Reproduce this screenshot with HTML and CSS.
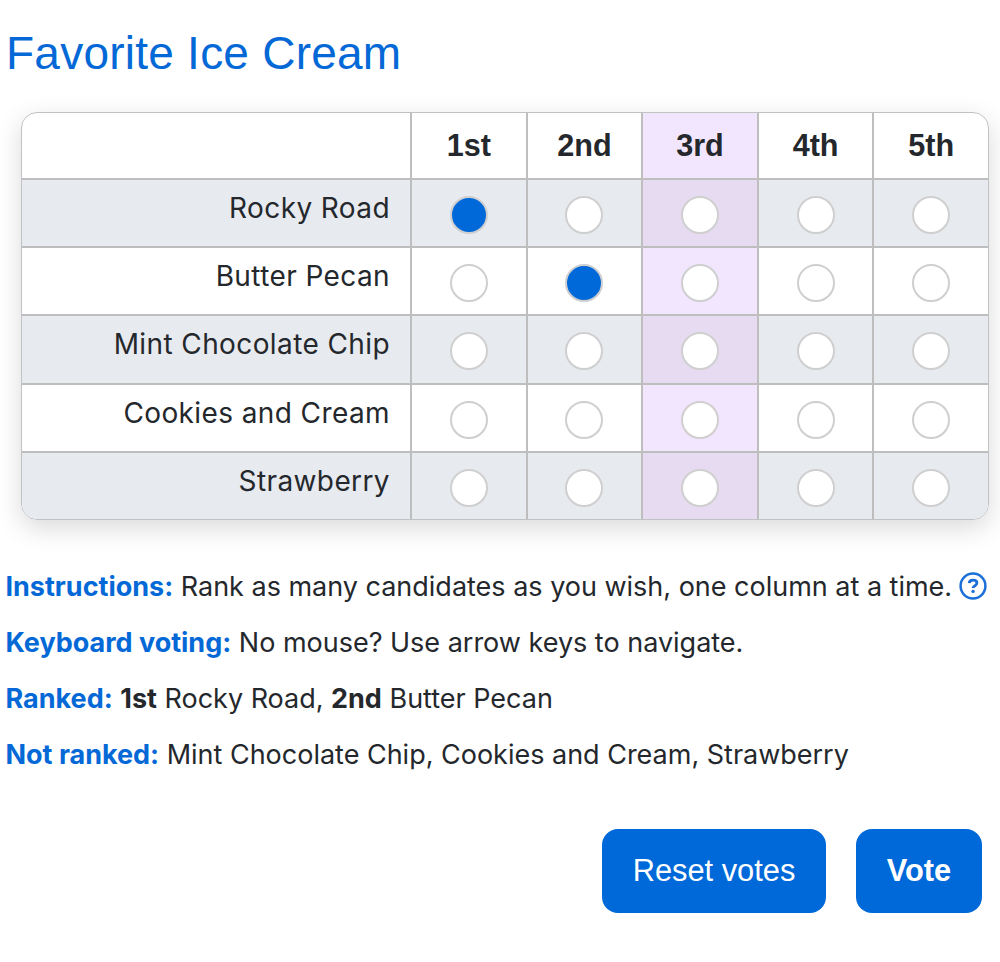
FILE: index.html
```html
<!DOCTYPE html>
<html lang="en">
<head>
  <meta charset="UTF-8" />
  <meta name="viewport" content="width=device-width, initial-scale=1.0" />
  <title>Favorite Ice Cream</title>
  <link rel="stylesheet" href="styles.css">
</head>
<body>
  <h1>Favorite Ice Cream</h1>
  <table class="ballot" id="ballot">
    <thead>
      <tr>
        <th class="name"></th>
        <th>1st</th>
        <th>2nd</th>
        <th class="active">3rd</th>
        <th>4th</th>
        <th>5th</th>
      </tr>
    </thead>
    <tbody>
      <tr>
        <td class="name">Rocky Road</td>
        <td><span class="oval filled"></span></td>
        <td><span class="oval"></span></td>
        <td class="active"><span class="oval"></span></td>
        <td><span class="oval"></span></td>
        <td><span class="oval"></span></td>
      </tr>
      <tr>
        <td class="name">Butter Pecan</td>
        <td><span class="oval"></span></td>
        <td><span class="oval filled"></span></td>
        <td class="active"><span class="oval"></span></td>
        <td><span class="oval"></span></td>
        <td><span class="oval"></span></td>
      </tr>
      <tr>
        <td class="name">Mint Chocolate Chip</td>
        <td><span class="oval"></span></td>
        <td><span class="oval"></span></td>
        <td class="active"><span class="oval"></span></td>
        <td><span class="oval"></span></td>
        <td><span class="oval"></span></td>
      </tr>
      <tr>
        <td class="name">Cookies and Cream</td>
        <td><span class="oval"></span></td>
        <td><span class="oval"></span></td>
        <td class="active"><span class="oval"></span></td>
        <td><span class="oval"></span></td>
        <td><span class="oval"></span></td>
      </tr>
      <tr>
        <td class="name">Strawberry</td>
        <td><span class="oval"></span></td>
        <td><span class="oval"></span></td>
        <td class="active"><span class="oval"></span></td>
        <td><span class="oval"></span></td>
        <td><span class="oval"></span></td>
      </tr>
    </tbody>
  </table>

  <div class="notes">
    <p><b class="label">Instructions:</b> Rank as many candidates as you wish, one column at a time.
      <svg class="help" viewBox="0 0 28 28" fill="none" stroke="currentColor">
        <circle cx="14" cy="14" r="12.4" stroke-width="2.5" />
        <path d="M10.2 11.1C10.3 9.1 11.9 8.1 14.1 8.1c2.3 0 3.8 1 3.8 2.8 0 1.4-.9 2.1-2 2.8-1.2.7-1.8 1.2-1.8 2.4" stroke-width="2.8" />
        <circle cx="14.1" cy="19.4" r="1.7" fill="currentColor" stroke="none" />
      </svg>
    </p>
    <p><b class="label">Keyboard voting:</b> No mouse? Use arrow keys to navigate.</p>
    <p><b class="label">Ranked:</b> <b>1st</b> Rocky Road, <b>2nd</b> Butter Pecan</p>
    <p><b class="label">Not ranked:</b> Mint Chocolate Chip, Cookies and Cream, Strawberry</p>
  </div>

  <div class="buttons">
    <button class="reset">Reset votes</button>
    <button class="vote">Vote</button>
  </div>
</body>
</html>
```

FILE: styles.css
```css
* {
  box-sizing: border-box;
}
body {
  margin: 0;
  background: #fff;
  color: #24282c;
  font-family: Inter, sans-serif;
  font-size: 27px;
}
h1 {
  margin: 0;
  padding: 25px 0 0 6px;
  height: 112px;
  font-family: "Liberation Sans", Arial, sans-serif;
  font-size: 46px;
  font-weight: 400;
  line-height: 56px;
  letter-spacing: 0.24px;
  color: #0469d6;
}
.ballot {
  margin-left: 21px;
  width: 968px;
  table-layout: fixed;
  border: 1px solid #c0c2c4;
  border-radius: 16px;
  border-collapse: separate;
  border-spacing: 0;
  overflow: hidden;
  box-shadow: 0 8px 26px rgba(0, 0, 0, 0.15);
}
.ballot th,
.ballot td {
  padding: 0;
  border-left: 2px solid #bebebe;
  text-align: center;
}
.ballot th {
  height: 65px;
  font-family: "Liberation Sans", Arial, sans-serif;
  font-size: 30.6px;
  font-weight: 700;
}
.ballot td {
  height: 68.2px;
  border-top: 2px solid #bebebe;
  padding-top: 4px;
  vertical-align: middle;
}
.ballot .name {
  width: 388px;
  border-left: none;
}
.ballot td.name {
  padding: 11px 20px 0 0;
  font-size: 28px;
  line-height: 34px;
  letter-spacing: 0.4px;
  text-align: right;
  vertical-align: top;
}
.ballot tbody tr:nth-child(odd) {
  background: #e7eaef;
}
.ballot .active {
  background: #f1e6fe;
}
.ballot tbody tr:nth-child(odd) .active {
  background: #e6dbf0;
}
.oval {
  display: block;
  width: 38px;
  height: 38px;
  margin: 0 auto;
  border: 2px solid #cfcfcf;
  border-radius: 50%;
  background: #fff;
}
.oval.filled {
  background: #0069d9;
}
.notes {
  padding: 47px 0 0 5.5px;
}
.notes p {
  margin: 0 0 16px;
  line-height: 40px;
  letter-spacing: -0.01px;
  white-space: nowrap;
}
.label {
  color: #0469d6;
}
.help {
  width: 28px;
  height: 28px;
  margin-left: -1px;
  vertical-align: -4px;
  color: #1a6fd8;
}
.buttons {
  display: flex;
  justify-content: flex-end;
  gap: 30px;
  padding: 38px 18px 0 0;
}
.buttons button {
  height: 84px;
  border: none;
  border-radius: 16px;
  background: #0069d9;
  color: #fff;
  font-family: "Liberation Sans", Arial, sans-serif;
  font-size: 30.8px;
}
.reset {
  width: 224px;
}
.buttons .vote {
  width: 126px;
  font-weight: 700;
}
```
